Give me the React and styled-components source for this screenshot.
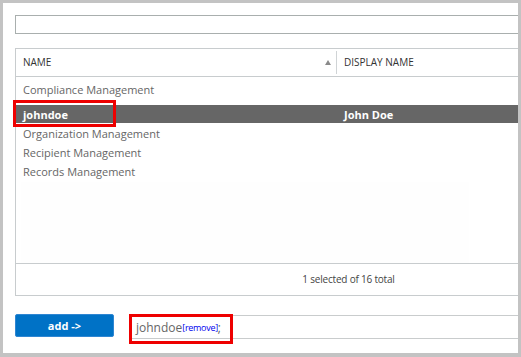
import styled, { createGlobalStyle } from "styled-components";

const Global = createGlobalStyle`
  html, body {
    margin: 0;
    padding: 0;
    background: #c3c3c3;
  }
  body {
    font-family: "Open Sans", "Liberation Sans", sans-serif;
  }
`;

const rows = [
  { name: "Compliance Management", display: "" },
  { name: "johndoe", display: "John Doe", selected: true },
  { name: "Organization Management", display: "" },
  { name: "Recipient Management", display: "" },
  { name: "Records Management", display: "" },
];

function App() {
  return (
    <>
      <Global />
      <Frame>
        <Content>
          <SearchBox />
          <Grid>
            <HeadRow>
              <HeadCell $width={321}>
                NAME
                <SortArrow viewBox="0 0 6 5">
                  <path d="M3 0 L6 5 L0 5 Z" fill="#8a8a8a" />
                </SortArrow>
              </HeadCell>
              <HeadCell>DISPLAY NAME</HeadCell>
            </HeadRow>
            <List>
              {rows.map((r) => (
                <Row key={r.name} $selected={r.selected}>
                  <Cell $width={321}>{r.name}</Cell>
                  <Cell>{r.display}</Cell>
                  {r.selected && <Highlight $w={103} $h={27} $l={-3} $t={-5} />}
                </Row>
              ))}
              <Blank />
            </List>
            <Footer>1 selected of 16 total</Footer>
          </Grid>
          <Actions>
            <AddButton>add -&gt;</AddButton>
            <Picked>
              <span>johndoe</span>
              <Remove>[remove]</Remove>
              <span>;</span>
              <Highlight $w={104} $h={30} $l={-3} $t={-2} />
            </Picked>
          </Actions>
        </Content>
      </Frame>
    </>
  );
}

const Frame = styled.div`
  margin: 3px 3px 4px 3px;
  height: 350px;
  background: #fff;
  overflow: hidden;
`;

const Content = styled.div`
  width: 667px;
  padding: 12px;
`;

const SearchBox = styled.div`
  height: 17px;
  border: 1px solid #a9afae;
  margin-bottom: 14px;
`;

const Grid = styled.div`
  border: 1px solid #c8ccce;
  display: flex;
  flex-direction: column;
`;

const HeadRow = styled.div`
  display: flex;
  height: 27px;
  border-bottom: 1px solid #c8ccce;
`;

const HeadCell = styled.div`
  position: relative;
  display: flex;
  align-items: center;
  box-sizing: border-box;
  width: ${(p) => (p.$width ? `${p.$width}px` : "auto")};
  flex: ${(p) => (p.$width ? "none" : "1")};
  padding-left: 7px;
  padding-bottom: 2px;
  font-size: 10px;
  color: #333;
  ${(p) =>
    p.$width &&
    `&::after {
      content: "";
      position: absolute;
      right: 0;
      top: 2px;
      bottom: 2px;
      width: 1px;
      background: #d0d4d6;
    }`}
`;

const SortArrow = styled.svg`
  position: absolute;
  right: 6px;
  top: 11px;
  width: 6px;
  height: 5px;
`;

const List = styled.div`
  height: 183px;
  padding-top: 3px;
  display: flex;
  flex-direction: column;
  border-bottom: 1px solid #c8ccce;
`;

const Row = styled.div`
  position: relative;
  display: flex;
  align-items: center;
  height: ${(p) => (p.$selected ? "18px" : "19px")};
  margin: ${(p) => (p.$selected ? "6px 0 1px" : "0")};
  background: ${(p) => (p.$selected ? "#666666" : "transparent")};
  color: ${(p) => (p.$selected ? "#fff" : "#666")};
  font-weight: ${(p) => (p.$selected ? 700 : 400)};
  font-size: 11px;
`;

const Cell = styled.div`
  box-sizing: border-box;
  width: ${(p) => (p.$width ? `${p.$width}px` : "auto")};
  flex: ${(p) => (p.$width ? "none" : "1")};
  padding-left: 7px;
  white-space: nowrap;
`;

const Blank = styled.div`
  margin: 1px 0 0 5px;
  width: 448px;
  flex: 1;
  background: #fefefe;
`;

const Footer = styled.div`
  height: 31px;
  display: flex;
  align-items: center;
  justify-content: center;
  padding-bottom: 1px;
  box-sizing: border-box;
  font-size: 10px;
  color: #444;
  letter-spacing: -0.2px;
`;

const Actions = styled.div`
  display: flex;
  align-items: flex-start;
  gap: 17px;
  margin-top: 18px;
`;

const AddButton = styled.button`
  width: 99px;
  height: 23px;
  border: 1px solid #2f86d2;
  border-radius: 2px;
  background: #0072c6;
  color: #fff;
  font-family: "Open Sans", "Liberation Sans", sans-serif;
  font-weight: 700;
  font-size: 11px;
  padding: 0;
`;

const Picked = styled.div`
  position: relative;
  flex: 1;
  height: 22px;
  margin-top: 1px;
  border: 1px solid #c9cccd;
  display: flex;
  align-items: center;
  padding-left: 4px;
  font-size: 12px;
  color: #666;
`;

const Remove = styled.span`
  color: #0000ee;
  font-size: 9px;
  letter-spacing: -0.3px;
`;

const Highlight = styled.div`
  position: absolute;
  left: ${(p) => p.$l}px;
  top: ${(p) => p.$t}px;
  width: ${(p) => p.$w}px;
  height: ${(p) => p.$h}px;
  box-sizing: border-box;
  border: 3px solid #ee0000;
  pointer-events: none;
`;

export default App;
